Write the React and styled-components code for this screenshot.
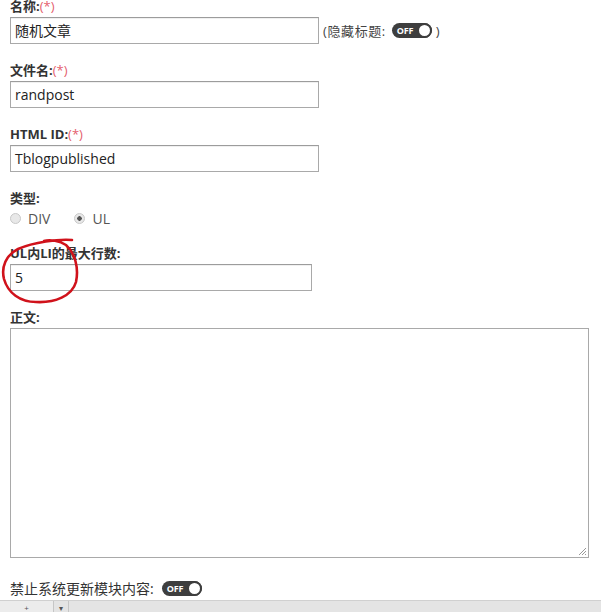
import React from "react";
import styled, { createGlobalStyle } from "styled-components";

const GlobalStyle = createGlobalStyle`
	html, body {
		margin: 0;
		padding: 0;
		background: #fff;
		overflow: hidden;
	}
	body {
		font-family: "Open Sans", "Noto Sans CJK SC", sans-serif;
		color: #333;
	}
`;

const Page = styled.div`
	position: relative;
	width: 601px;
	height: 612px;
	overflow: hidden;
`;

const Form = styled.div`
	padding: 0 10px;
	margin-top: -2px;
`;

const Field = styled.div`
	margin-bottom: 18px;
`;

const Label = styled.div`
	height: 16px;
	line-height: 16px;
	font-size: 13px;
	font-weight: bold;
	color: #333;
	margin-bottom: 3px;
	white-space: nowrap;
`;

const Required = styled.span`
	font-weight: normal;
	color: #e4606d;
`;

const Row = styled.div`
	display: flex;
	align-items: center;
	gap: 4px;
	font-size: 13px;
	color: #444;
`;

const Hint = styled.span`
	letter-spacing: 0.6px;
	margin-right: 2px;
`;

const Input = styled.div`
	box-sizing: border-box;
	width: ${(p) => p.$w}px;
	height: 27px;
	border: 1px solid #a9a9a9;
	border-top-color: #9c9c9c;
	box-shadow: inset 0 1px 0 #f0f0f0;
	background: #fff;
	padding: 0 4px;
	font-size: 14px;
	line-height: 25px;
	color: #222;
`;

const TextArea = styled.div`
	position: relative;
	box-sizing: border-box;
	width: 579px;
	height: 230px;
	border: 1px solid #a9a9a9;
	background: #fff;
`;

const Grip = styled.svg`
	position: absolute;
	right: 1px;
	bottom: 1px;
`;

const Toggle = styled.span`
	display: inline-flex;
	align-items: center;
	box-sizing: border-box;
	width: 40px;
	height: 15px;
	border-radius: 8px;
	background: #3e3e3e;
	padding-left: 5px;
	position: relative;
	font-size: 9px;
	font-weight: bold;
	color: #fff;
	letter-spacing: -0.2px;
	line-height: 15px;
`;

const Knob = styled.span`
	position: absolute;
	right: 0;
	top: 0;
	width: 15px;
	height: 15px;
	box-sizing: border-box;
	border-radius: 50%;
	background: #fff;
	border: 2px solid #3e3e3e;
`;

const RadioRow = styled.div`
	display: flex;
	align-items: center;
	height: 18px;
	font-size: 14px;
	color: #555;
`;

const RadioItem = styled.label`
	display: flex;
	align-items: center;
	gap: 7px;
	margin-right: 24px;
`;

const Radio = styled.span`
	box-sizing: border-box;
	width: 11px;
	height: 11px;
	border-radius: 50%;
	border: 1px solid #c8c8c8;
	background: ${(p) =>
		p.$checked
			? "radial-gradient(circle, #555 0 2px, #e8e8e8 2.5px)"
			: "#e8e8e8"};
`;

const SwitchLine = styled.div`
	display: flex;
	align-items: center;
	gap: 8px;
	height: 24px;
	font-size: 14px;
	color: #333;
`;

const Toolbar = styled.div`
	display: flex;
	height: 15px;
	background: #e4e4e4;
	border-top: 1px solid #d0d0d0;
	overflow: hidden;
`;

const ToolButton = styled.div`
	width: ${(p) => p.$w}px;
	border-right: 1px solid #c6c6c6;
	background: ${(p) => (p.$light ? "#ececec" : "#e4e4e4")};
	font-size: 8px;
	color: #555;
	text-align: center;
	line-height: 14px;
`;

const Annotation = styled.svg`
	position: absolute;
	left: 0;
	top: 236px;
	pointer-events: none;
`;

const OffSwitch = () => (
	<Toggle>
		OFF
		<Knob />
	</Toggle>
);

export default function App() {
	return (
		<Page>
			<GlobalStyle />
			<Form>
				<Field>
					<Label>
						名称:<Required>(*)</Required>
					</Label>
					<Row>
						<Input $w={309}>随机文章</Input>
						<Hint>(隐藏标题:</Hint>
						<OffSwitch />
						<span>)</span>
					</Row>
				</Field>
				<Field>
					<Label>
						文件名:<Required>(*)</Required>
					</Label>
					<Input $w={309}>randpost</Input>
				</Field>
				<Field>
					<Label>
						HTML ID:<Required>(*)</Required>
					</Label>
					<Input $w={309}>Tblogpublished</Input>
				</Field>
				<Field>
					<Label>类型:</Label>
					<RadioRow>
						<RadioItem>
							<Radio />
							DIV
						</RadioItem>
						<RadioItem>
							<Radio $checked />
							UL
						</RadioItem>
					</RadioRow>
				</Field>
				<Field>
					<Label>UL内LI的最大行数:</Label>
					<Input $w={302}>5</Input>
				</Field>
				<Field>
					<Label>正文:</Label>
					<TextArea>
						<Grip width="10" height="10" viewBox="0 0 10 10">
							<path d="M9 2 L2 9 M9 5 L5 9 M9 8 L8 9" stroke="#999" strokeWidth="1" />
						</Grip>
					</TextArea>
				</Field>
				<SwitchLine>
					禁止系统更新模块内容:
					<OffSwitch />
				</SwitchLine>
			</Form>
			<Toolbar>
				<ToolButton $w={53} $light>+</ToolButton>
				<ToolButton $w={14}>▾</ToolButton>
			</Toolbar>
			<Annotation width="90" height="72" viewBox="0 0 90 72">
				<path
					d="M72 4 C58 3 34 6 18 13 C6 19 1 31 4 43 C8 57 20 66 36 66 C55 67 72 60 76 46 C79 32 75 17 66 9 C60 5 50 3 44 5"
					fill="none"
					stroke="#d0121b"
					strokeWidth="2.6"
					strokeLinecap="round"
				/>
			</Annotation>
		</Page>
	);
}
